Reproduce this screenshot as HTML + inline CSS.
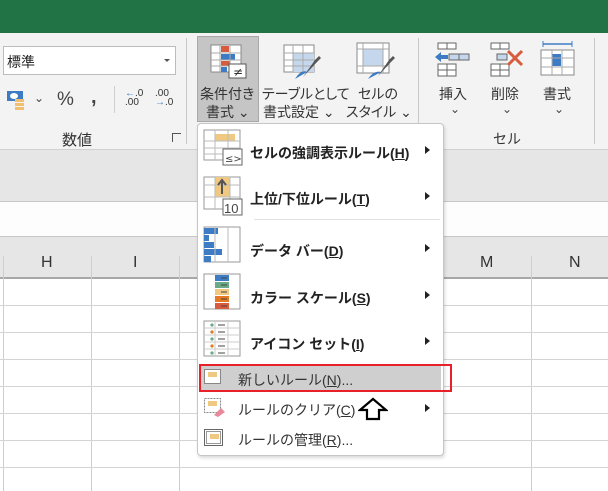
<!DOCTYPE html>
<html><head><meta charset="utf-8"><style>
*{margin:0;padding:0;box-sizing:border-box}
body{width:608px;height:491px;overflow:hidden;position:relative;background:#fff;font-family:"Liberation Sans","Noto Sans CJK JP",sans-serif;color:#222}
.a{position:absolute}
.t{position:absolute;font-size:14px;white-space:nowrap;color:#333}
.p{font-feature-settings:"palt"}
.vl{position:absolute;width:1px;background:#d4d4d4}
.hl{position:absolute;height:1px;background:#d4d4d4}
.mi{position:absolute;left:250px;font-size:14px;font-weight:bold;color:#222;white-space:nowrap}
.mi2{position:absolute;left:238px;font-size:14px;color:#333;white-space:nowrap}
.arr{position:absolute;left:425px;width:0;height:0;border-left:5px solid #222;border-top:4px solid transparent;border-bottom:4px solid transparent}
u{text-decoration:underline}
</style></head><body>
<div class="a" style="left:0;top:0;width:608px;height:33px;background:#217346"></div>
<div class="a" style="left:0;top:33px;width:608px;height:116px;background:#f3f3f3"></div>
<div class="a" style="left:0;top:149px;width:608px;height:1px;background:#d0d0d0"></div>
<div class="a" style="left:0;top:150px;width:608px;height:51px;background:#e6e6e6"></div>
<div class="a" style="left:0;top:201px;width:608px;height:1px;background:#c6c6c6"></div>
<div class="a" style="left:0;top:202px;width:608px;height:34px;background:#fdfdfd"></div>
<div class="a" style="left:0;top:236px;width:608px;height:1px;background:#c6c6c6"></div>
<div class="a" style="left:0;top:237px;width:608px;height:41px;background:#e6e6e6"></div>
<div class="a" style="left:0;top:277px;width:608px;height:2px;background:#a8a8a8"></div>
<div class="vl" style="left:3px;top:256px;height:235px;background:#cfcfcf"></div>
<div class="vl" style="left:91px;top:256px;height:235px;background:#cfcfcf"></div>
<div class="vl" style="left:179px;top:256px;height:235px;background:#cfcfcf"></div>
<div class="vl" style="left:531px;top:256px;height:235px;background:#cfcfcf"></div>
<div class="hl" style="left:0;top:305px;width:608px"></div>
<div class="hl" style="left:0;top:332px;width:608px"></div>
<div class="hl" style="left:0;top:359px;width:608px"></div>
<div class="hl" style="left:0;top:386px;width:608px"></div>
<div class="hl" style="left:0;top:413px;width:608px"></div>
<div class="hl" style="left:0;top:440px;width:608px"></div>
<div class="hl" style="left:0;top:467px;width:608px"></div>
<div class="t" style="left:41px;top:254px;font-size:16px">H</div>
<div class="t" style="left:133px;top:254px;font-size:16px">I</div>
<div class="t" style="left:480px;top:254px;font-size:16px">M</div>
<div class="t" style="left:569px;top:254px;font-size:16px">N</div>
<div class="a" style="left:3px;top:46px;width:173px;height:29px;background:#fff;border:1px solid #bcbcbc"></div>
<div class="t" style="left:7px;top:52px;font-size:14px;color:#222">標準</div>
<div class="a" style="left:164px;top:59px;border-top:3px solid #555;border-left:3px solid transparent;border-right:3px solid transparent"></div>
<svg class="a" style="left:7px;top:90px" width="20" height="20"><rect x="0" y="1" width="16" height="10" fill="#3d7cc4"/><ellipse cx="7" cy="6" rx="4" ry="3" fill="#fff"/><rect x="8" y="9" width="9" height="3" fill="#f0c070"/><rect x="8" y="13" width="9" height="3" fill="#f0c070"/><rect x="8" y="17" width="9" height="3" fill="#f0c070"/></svg>
<div class="t" style="left:34px;top:91px;font-size:12px;color:#444">⌄</div>
<div class="t" style="left:57px;top:89px;font-size:19px;color:#444">%</div>
<div class="t" style="left:91px;top:86px;font-size:20px;font-weight:bold;color:#444">,</div>
<div class="vl" style="left:114px;top:86px;height:27px;background:#cfcfcf"></div>
<div class="t" style="left:125px;top:89px;font-size:10px;line-height:9px;color:#333"><span style="color:#3d7cc4">←</span>.0<br>.00</div>
<div class="t" style="left:155px;top:89px;font-size:10px;line-height:9px;color:#333">.00<br><span style="color:#3d7cc4">→</span>.0</div>
<div class="t" style="left:62px;top:129px;font-size:15px;color:#333">数値</div>
<div class="a" style="left:172px;top:133px;width:9px;height:9px;border-left:1px solid #555;border-top:1px solid #555"></div>
<div class="vl" style="left:186px;top:38px;height:106px;background:#c8c8c8"></div>
<div class="a" style="left:197px;top:36px;width:62px;height:86px;background:#c5c5c5;border:1px solid #a9a9a9"></div>
<svg class="a" style="left:210px;top:44px" width="38" height="36"><g stroke="#888" fill="#fff"><rect x="1" y="1" width="30" height="27"/></g><rect x="11" y="2" width="8" height="6" fill="#d75b3c"/><rect x="11" y="10" width="14" height="6" fill="#3d7cc4"/><rect x="11" y="17" width="9" height="5" fill="#d75b3c"/><rect x="11" y="23" width="6" height="5" fill="#3d7cc4"/><g stroke="#aaa"><line x1="10" y1="1" x2="10" y2="28"/><line x1="20" y1="1" x2="20" y2="28"/><line x1="1" y1="9" x2="31" y2="9"/><line x1="1" y1="16" x2="31" y2="16"/><line x1="1" y1="22" x2="31" y2="22"/></g><rect x="19" y="20" width="17" height="14" fill="#fff" stroke="#555"/><text x="23" y="32" font-size="12" fill="#333" font-family="DejaVu Sans">≠</text></svg>
<div class="t p" style="left:200px;top:84px;font-size:14px;color:#333">条件付き</div>
<div class="t p" style="left:206px;top:102px;font-size:14px;color:#333">書式 ⌄</div>
<svg class="a" style="left:283px;top:44px" width="40" height="36"><rect x="1" y="1" width="30" height="27" fill="#fff" stroke="#888"/><rect x="10" y="9" width="21" height="19" fill="#c4d7ec"/><g stroke="#aaa"><line x1="10" y1="1" x2="10" y2="28"/><line x1="20" y1="1" x2="20" y2="28"/><line x1="1" y1="9" x2="31" y2="9"/><line x1="1" y1="16" x2="31" y2="16"/><line x1="1" y1="22" x2="31" y2="22"/></g><path d="M20 33 L34 18 L38 14 L36 12 L32 16 Z" fill="#555"/><path d="M12 35 Q18 25 24 28 Z" fill="#3d7cc4"/></svg>
<div class="t p" style="left:262px;top:84px;font-size:14px;color:#333">テーブルとして</div>
<div class="t p" style="left:263px;top:102px;font-size:14px;color:#333">書式設定 ⌄</div>
<svg class="a" style="left:356px;top:42px" width="40" height="38"><rect x="1" y="1" width="32" height="30" fill="#fff" stroke="#888"/><rect x="7" y="7" width="20" height="17" fill="#c4d7ec"/><g stroke="#aaa"><line x1="7" y1="1" x2="7" y2="31"/><line x1="27" y1="1" x2="27" y2="31"/><line x1="1" y1="7" x2="33" y2="7"/><line x1="1" y1="24" x2="33" y2="24"/></g><path d="M22 34 L35 20 L39 16 L37 14 L33 18 Z" fill="#555"/><path d="M12 37 Q18 28 25 30 Z" fill="#3d7cc4"/></svg>
<div class="t p" style="left:358px;top:84px;font-size:14px;color:#333">セルの</div>
<div class="t p" style="left:346px;top:102px;font-size:14px;color:#333">スタイル ⌄</div>
<div class="vl" style="left:418px;top:38px;height:106px;background:#c8c8c8"></div>
<svg class="a" style="left:434px;top:42px" width="36" height="36"><g fill="#fff" stroke="#666"><rect x="4" y="1" width="9" height="6"/><rect x="13" y="1" width="9" height="6"/><rect x="15" y="12" width="10" height="6" fill="#c4d7ec"/><rect x="25" y="12" width="10" height="6" fill="#c4d7ec"/><rect x="4" y="22" width="9" height="6"/><rect x="13" y="22" width="9" height="6"/><rect x="4" y="28" width="9" height="6"/><rect x="13" y="28" width="9" height="6"/></g><path d="M1 15 L7 10 L7 13 L14 13 L14 17 L7 17 L7 20 Z" fill="#3d7cc4"/></svg>
<div class="t" style="left:439px;top:84px;font-size:14px;color:#333">挿入</div>
<div class="t" style="left:450px;top:102px;font-size:12px;color:#444">⌄</div>
<svg class="a" style="left:489px;top:42px" width="36" height="36"><g fill="#fff" stroke="#666"><rect x="2" y="1" width="9" height="6"/><rect x="11" y="1" width="9" height="6"/><rect x="8" y="12" width="10" height="6" fill="#c4d7ec"/><rect x="2" y="22" width="9" height="6"/><rect x="11" y="22" width="9" height="6"/><rect x="2" y="28" width="9" height="6"/><rect x="11" y="28" width="9" height="6"/></g><path d="M19 9 L33 23 M33 9 L19 23" stroke="#d75b3c" stroke-width="3"/></svg>
<div class="t" style="left:491px;top:84px;font-size:14px;color:#333">削除</div>
<div class="t" style="left:502px;top:102px;font-size:12px;color:#444">⌄</div>
<svg class="a" style="left:540px;top:40px" width="36" height="40"><path d="M3 4 L32 4" stroke="#3d7cc4" stroke-width="1.5"/><path d="M3 1V7M32 1V7" stroke="#3d7cc4"/><rect x="1" y="10" width="33" height="25" fill="#fff" stroke="#888"/><rect x="12" y="14" width="9" height="12" fill="#3d7cc4"/><g stroke="#aaa"><line x1="12" y1="10" x2="12" y2="35"/><line x1="22" y1="10" x2="22" y2="35"/><line x1="1" y1="18" x2="34" y2="18"/><line x1="1" y1="27" x2="34" y2="27"/></g></svg>
<div class="t" style="left:543px;top:84px;font-size:14px;color:#333">書式</div>
<div class="t" style="left:554px;top:102px;font-size:12px;color:#444">⌄</div>
<div class="t" style="left:493px;top:129px;font-size:14px;color:#333">セル</div>
<div class="vl" style="left:594px;top:38px;height:106px;background:#c8c8c8"></div>
<div class="a" style="left:197px;top:123px;width:247px;height:333px;background:#fff;border:1px solid #c6c6c6;border-radius:4px;box-shadow:1px 2px 3px rgba(0,0,0,.15)"></div>
<svg class="a" style="left:203px;top:129px" width="40" height="38"><rect x="1" y="1" width="36" height="30" fill="#fff" stroke="#999"/><rect x="12" y="5" width="20" height="7" fill="#efc882"/><g stroke="#bbb"><line x1="12" y1="1" x2="12" y2="31"/><line x1="25" y1="1" x2="25" y2="31"/><line x1="1" y1="12" x2="37" y2="12"/><line x1="1" y1="19" x2="37" y2="19"/><line x1="1" y1="25" x2="37" y2="25"/></g><rect x="20" y="20" width="19" height="16" fill="#fff" stroke="#666"/><text x="22" y="33" font-size="10" fill="#444" font-family="DejaVu Sans">≤&gt;</text></svg>
<div class="mi" style="top:143px">セルの強調表示ルール(<u>H</u>)</div><div class="arr" style="top:146px"></div>
<svg class="a" style="left:203px;top:176px" width="40" height="40"><rect x="1" y="1" width="36" height="32" fill="#fff" stroke="#999"/><rect x="12" y="1" width="15" height="20" fill="#efc882"/><g stroke="#bbb"><line x1="12" y1="1" x2="12" y2="33"/><line x1="27" y1="1" x2="27" y2="33"/><line x1="1" y1="9" x2="37" y2="9"/><line x1="1" y1="21" x2="37" y2="21"/></g><path d="M19 18V5M15 9L19 4L23 9" stroke="#555" stroke-width="2" fill="none"/><rect x="20" y="23" width="19" height="16" fill="#fff" stroke="#666"/><text x="21" y="37" font-size="13" fill="#444">10</text></svg>
<div class="mi" style="top:189px">上位/下位ルール(<u>T</u>)</div><div class="arr" style="top:192px"></div>
<div class="hl" style="left:254px;top:219px;width:186px;background:#e1e1e1"></div>
<svg class="a" style="left:203px;top:226px" width="38" height="38"><rect x="1" y="1" width="36" height="35" fill="#fff" stroke="#999"/><rect x="1" y="2" width="14" height="6" fill="#3d7cc4"/><rect x="1" y="9" width="5" height="6" fill="#3d7cc4"/><rect x="1" y="16" width="10" height="6" fill="#3d7cc4"/><rect x="1" y="23" width="18" height="6" fill="#3d7cc4"/><rect x="1" y="30" width="7" height="6" fill="#3d7cc4"/><g stroke="#bbb"><line x1="12" y1="1" x2="12" y2="36"/><line x1="25" y1="1" x2="25" y2="36"/></g></svg>
<div class="mi" style="top:241px">データ バー(<u>D</u>)</div><div class="arr" style="top:244px"></div>
<svg class="a" style="left:203px;top:273px" width="38" height="38"><rect x="1" y="1" width="36" height="35" fill="#fff" stroke="#999"/><rect x="12" y="2" width="14" height="6" fill="#3d7cc4"/><rect x="12" y="9" width="14" height="6" fill="#6aaa88"/><rect x="12" y="16" width="14" height="6" fill="#efc882"/><rect x="12" y="23" width="14" height="6" fill="#e67a22"/><rect x="12" y="30" width="14" height="6" fill="#d75b3c"/><g stroke="#444"><line x1="18" y1="5" x2="24" y2="5"/><line x1="18" y1="12" x2="24" y2="12"/><line x1="18" y1="19" x2="24" y2="19"/><line x1="18" y1="26" x2="24" y2="26"/><line x1="18" y1="33" x2="24" y2="33"/></g></svg>
<div class="mi" style="top:288px">カラー スケール(<u>S</u>)</div><div class="arr" style="top:291px"></div>
<svg class="a" style="left:203px;top:320px" width="38" height="38"><rect x="1" y="1" width="36" height="35" fill="#fff" stroke="#999"/><g stroke="#ccc"><line x1="12" y1="1" x2="12" y2="36"/><line x1="25" y1="1" x2="25" y2="36"/><line x1="1" y1="8" x2="37" y2="8"/><line x1="1" y1="15" x2="37" y2="15"/><line x1="1" y1="22" x2="37" y2="22"/><line x1="1" y1="29" x2="37" y2="29"/></g><circle cx="9" cy="5" r="1.6" fill="#6aaa88"/><circle cx="9" cy="12" r="1.6" fill="#e67a22"/><circle cx="9" cy="19" r="1.6" fill="#6aaa88"/><circle cx="9" cy="26" r="1.6" fill="#e67a22"/><circle cx="9" cy="33" r="1.6" fill="#6aaa88"/><g stroke="#444"><line x1="15" y1="5" x2="22" y2="5"/><line x1="15" y1="12" x2="22" y2="12"/><line x1="15" y1="19" x2="22" y2="19"/><line x1="15" y1="26" x2="22" y2="26"/><line x1="15" y1="33" x2="22" y2="33"/></g></svg>
<div class="mi" style="top:334px">アイコン セット(<u>I</u>)</div><div class="arr" style="top:337px"></div>
<div class="a" style="left:199px;top:366px;width:242px;height:24px;background:#cfcfcf"></div>
<div class="a" style="left:199px;top:364px;width:253px;height:28px;border:2px solid #e8202a"></div>
<svg class="a" style="left:204px;top:369px" width="18" height="16"><rect x="0.5" y="0.5" width="16" height="14" fill="#fff" stroke="#888"/><rect x="4" y="3" width="9" height="5" fill="#efc882"/></svg>
<div class="mi2" style="top:370px">新しいルール(<u>N</u>)...</div>
<svg class="a" style="left:204px;top:398px" width="22" height="20"><rect x="0.5" y="0.5" width="16" height="14" fill="#fff" stroke="#888" stroke-dasharray="2 1"/><rect x="4" y="3" width="9" height="5" fill="#efc882"/><path d="M10 17 L17 10 L21 14 L14 19 Z" fill="#e8889a"/></svg>
<div class="mi2" style="top:400px">ルールのクリア(<u>C</u>)</div><div class="arr" style="top:404px"></div>
<svg class="a" style="left:358px;top:397px" width="30" height="24"><path d="M15 2 L28 13 L21 13 L21 22 L9 22 L9 13 L2 13 Z" fill="#fff" stroke="#000" stroke-width="2.2"/></svg>
<svg class="a" style="left:204px;top:429px" width="20" height="18"><rect x="0.5" y="0.5" width="18" height="16" fill="#fff" stroke="#666"/><rect x="2.5" y="2.5" width="14" height="12" fill="none" stroke="#999"/><rect x="6" y="5" width="9" height="5" fill="#efc882"/></svg>
<div class="mi2" style="top:430px">ルールの管理(<u>R</u>)...</div>
</body></html>
